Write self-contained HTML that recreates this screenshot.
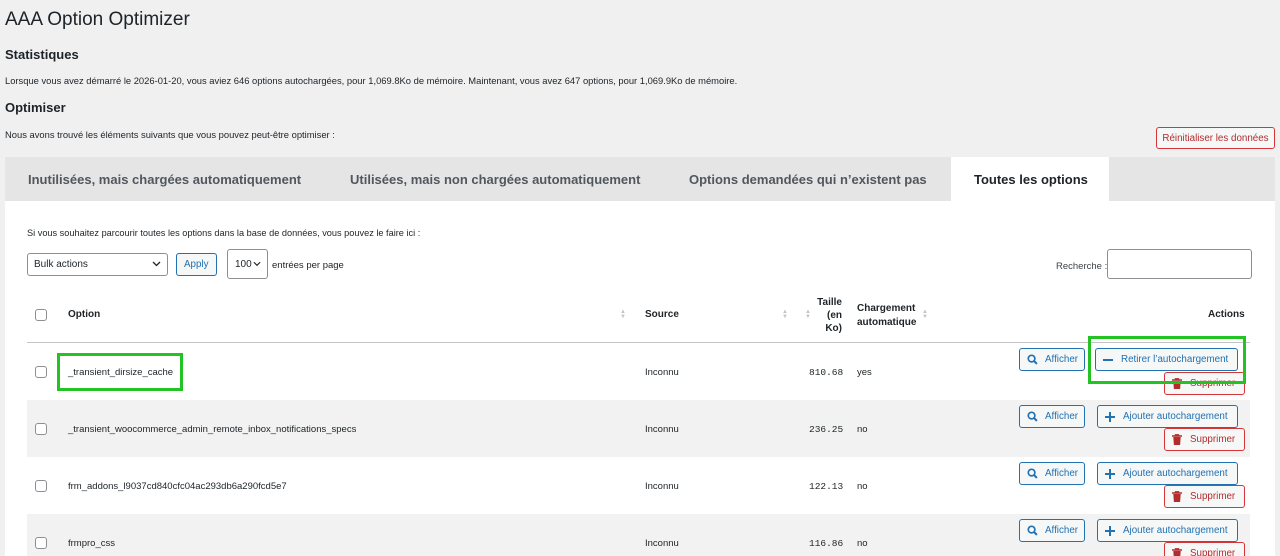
<!DOCTYPE html>
<html><head><meta charset="utf-8"><style>
*{box-sizing:border-box;margin:0;padding:0}
html,body{width:1280px;height:556px;overflow:hidden}
body{background:#f0f0f1;font-family:"Liberation Sans",sans-serif;color:#1d2327;position:relative}
.a{position:absolute;white-space:nowrap}
.btn{position:absolute;height:23px;border:1px solid #2271b1;border-radius:3px;background:#f6f7f7;color:#2271b1;font-size:9.8px;display:flex;align-items:center;padding:0 7px;white-space:nowrap}
.del{border-color:#d63638;color:#b32d2e;background:#f6f7f7}
.cb{position:absolute;width:12px;height:12px;border:1px solid #8c8f94;border-radius:3px;background:#fff}
.sort{position:absolute;font-size:6px;color:#c3c4c7;line-height:5px}
.t{font-size:9.5px}
svg{flex:none}
</style></head><body>
<div class="a" style="left:5px;top:9px;font-size:19px">AAA Option Optimizer</div>
<div class="a" style="left:5px;top:47px;font-size:13px;font-weight:bold">Statistiques</div>
<div class="a" style="left:5px;top:75px;font-size:9.4px">Lorsque vous avez démarré le 2026-01-20, vous aviez 646 options autochargées, pour 1,069.8Ko de mémoire. Maintenant, vous avez 647 options, pour 1,069.9Ko de mémoire.</div>
<div class="a" style="left:5px;top:100px;font-size:13px;font-weight:bold">Optimiser</div>
<div class="a" style="left:5px;top:129px;font-size:9.4px">Nous avons trouvé les éléments suivants que vous pouvez peut-être optimiser :</div>
<div class="btn del" style="left:1156px;width:119px;top:127px;height:22px;justify-content:center;padding:0">Réinitialiser les données</div>

<div class="a" style="left:5px;top:157px;width:1270px;height:399px;background:#fff"></div>
<div class="a" style="left:5px;top:157px;width:1270px;height:44px;background:#e5e5e5"></div>
<div class="a" style="left:951px;top:157px;width:158px;height:44px;background:#fff"></div>
<div class="a" style="left:28px;top:172px;font-size:13px;font-weight:bold;color:#50575e">Inutilisées, mais chargées automatiquement</div>
<div class="a" style="left:350px;top:172px;font-size:13px;font-weight:bold;color:#50575e">Utilisées, mais non chargées automatiquement</div>
<div class="a" style="left:689px;top:172px;font-size:13px;font-weight:bold;color:#50575e">Options demandées qui n’existent pas</div>
<div class="a" style="left:974px;top:172px;font-size:13px;font-weight:bold;color:#1d2327">Toutes les options</div>

<div class="a" style="left:27px;top:228px;font-size:9.2px">Si vous souhaitez parcourir toutes les options dans la base de données, vous pouvez le faire ici :</div>
<div class="a" style="left:27px;top:253px;width:141px;height:23px;border:1px solid #8c8f94;border-radius:3px;background:#fff;font-size:10px;padding:5px 6px">Bulk actions<svg style="position:absolute;right:6px;top:7px" width="9" height="6" viewBox="0 0 9 6"><path d="M1 1l3.5 3.5L8 1" stroke="#1d2327" stroke-width="1.3" fill="none"/></svg></div>
<div class="btn" style="left:176px;top:253px;height:23px;padding:0 7px">Apply</div>
<div class="a" style="left:227px;top:249px;width:41px;height:30px;border:1px solid #8c8f94;border-radius:3px;background:#fff;font-size:10px;padding:9px 7px">100<svg style="margin-left:1px" width="8" height="6" viewBox="0 0 9 6"><path d="M1 1l3.5 3.5L8 1" stroke="#1d2327" stroke-width="1.3" fill="none"/></svg></div>
<div class="a" style="left:272px;top:260px;font-size:9.5px">entrées per page</div>
<div class="a" style="left:1056px;top:261px;font-size:9.5px;color:#3c434a">Recherche :</div>
<div class="a" style="left:1107px;top:249px;width:145px;height:30px;border:1px solid #8c8f94;border-radius:3px;background:#fff"></div>

<div class="cb" style="left:35px;top:309px"></div>
<div class="a" style="left:68px;top:309px;font-size:10px;font-weight:bold">Option</div>
<div class="sort" style="left:620px;top:310px">▲<br>▼</div>
<div class="a" style="left:645px;top:309px;font-size:10px;font-weight:bold">Source</div>
<div class="sort" style="left:782px;top:310px">▲<br>▼</div>
<div class="sort" style="left:805px;top:310px">▲<br>▼</div>
<div class="a" style="left:800px;top:296px;width:42px;text-align:right;font-size:10px;font-weight:bold;line-height:13px">Taille<br>(en<br>Ko)</div>
<div class="a" style="left:857px;top:302px;font-size:10px;font-weight:bold;line-height:14px">Chargement<br>automatique</div>
<div class="sort" style="left:922px;top:310px">▲<br>▼</div>
<div class="a" style="left:1208px;top:309px;font-size:10px;font-weight:bold">Actions</div>
<div class="a" style="left:27px;top:342px;width:1223px;height:1px;background:#c3c4c7"></div>

<div class="a" style="left:27px;top:400px;width:1223px;height:57px;background:#f2f2f2"></div>
<div class="a" style="left:27px;top:514px;width:1223px;height:42px;background:#f2f2f2"></div>

<!-- row1 -->
<div class="cb" style="left:35px;top:366px"></div>
<div class="a t" style="left:68px;top:367px">_transient_dirsize_cache</div>
<div class="a t" style="left:645px;top:367px">Inconnu</div>
<div class="a" style="left:809px;top:367px;font-size:9.5px;font-family:'Liberation Mono',monospace">810.68</div>
<div class="a t" style="left:857px;top:367px">yes</div>
<div class="btn" style="left:1019px;top:348px;width:66px"><svg width="11" height="11" viewBox="0 0 12 12"><circle cx="5" cy="5" r="3.6" stroke="#2271b1" stroke-width="1.8" fill="none"/><path d="M7.6 7.6l3.2 3.2" stroke="#2271b1" stroke-width="2.2"/></svg><span style="margin-left:7px">Afficher</span></div>
<div class="btn" style="left:1095px;top:348px;width:143px"><svg width="10" height="10" viewBox="0 0 10 10"><path d="M0 5h10" stroke="#2271b1" stroke-width="2"/></svg><span style="margin-left:8px">Retirer l’autochargement</span></div>
<div class="btn del" style="left:1164px;top:372px;width:81px"><svg width="10" height="11" viewBox="0 0 10 11"><path d="M0 2h10M3.5 2V0.8h3V2" stroke="#b32d2e" stroke-width="1.4" fill="none"/><path d="M1.3 3h7.4l-0.6 8H1.9z" fill="#b32d2e"/></svg><span style="margin-left:8px">Supprimer</span></div>
<div class="a" style="left:57px;top:353px;width:126px;height:38px;border:3px solid #22c322"></div>
<div class="a" style="left:1088px;top:336px;width:158px;height:48px;border:3px solid #22c322"></div>

<!-- row2 -->
<div class="cb" style="left:35px;top:423px"></div>
<div class="a t" style="left:68px;top:424px">_transient_woocommerce_admin_remote_inbox_notifications_specs</div>
<div class="a t" style="left:645px;top:424px">Inconnu</div>
<div class="a" style="left:809px;top:424px;font-size:9.5px;font-family:'Liberation Mono',monospace">236.25</div>
<div class="a t" style="left:857px;top:424px">no</div>
<div class="btn" style="left:1019px;top:405px;width:66px"><svg width="11" height="11" viewBox="0 0 12 12"><circle cx="5" cy="5" r="3.6" stroke="#2271b1" stroke-width="1.8" fill="none"/><path d="M7.6 7.6l3.2 3.2" stroke="#2271b1" stroke-width="2.2"/></svg><span style="margin-left:7px">Afficher</span></div>
<div class="btn" style="left:1097px;top:405px;width:141px"><svg width="10" height="10" viewBox="0 0 10 10"><path d="M0 5h10M5 0v10" stroke="#2271b1" stroke-width="2"/></svg><span style="margin-left:8px">Ajouter autochargement</span></div>
<div class="btn del" style="left:1164px;top:428px;width:81px"><svg width="10" height="11" viewBox="0 0 10 11"><path d="M0 2h10M3.5 2V0.8h3V2" stroke="#b32d2e" stroke-width="1.4" fill="none"/><path d="M1.3 3h7.4l-0.6 8H1.9z" fill="#b32d2e"/></svg><span style="margin-left:8px">Supprimer</span></div>

<!-- row3 -->
<div class="cb" style="left:35px;top:480px"></div>
<div class="a t" style="left:68px;top:481px">frm_addons_l9037cd840cfc04ac293db6a290fcd5e7</div>
<div class="a t" style="left:645px;top:481px">Inconnu</div>
<div class="a" style="left:809px;top:481px;font-size:9.5px;font-family:'Liberation Mono',monospace">122.13</div>
<div class="a t" style="left:857px;top:481px">no</div>
<div class="btn" style="left:1019px;top:462px;width:66px"><svg width="11" height="11" viewBox="0 0 12 12"><circle cx="5" cy="5" r="3.6" stroke="#2271b1" stroke-width="1.8" fill="none"/><path d="M7.6 7.6l3.2 3.2" stroke="#2271b1" stroke-width="2.2"/></svg><span style="margin-left:7px">Afficher</span></div>
<div class="btn" style="left:1097px;top:462px;width:141px"><svg width="10" height="10" viewBox="0 0 10 10"><path d="M0 5h10M5 0v10" stroke="#2271b1" stroke-width="2"/></svg><span style="margin-left:8px">Ajouter autochargement</span></div>
<div class="btn del" style="left:1164px;top:485px;width:81px"><svg width="10" height="11" viewBox="0 0 10 11"><path d="M0 2h10M3.5 2V0.8h3V2" stroke="#b32d2e" stroke-width="1.4" fill="none"/><path d="M1.3 3h7.4l-0.6 8H1.9z" fill="#b32d2e"/></svg><span style="margin-left:8px">Supprimer</span></div>

<!-- row4 -->
<div class="cb" style="left:35px;top:537px"></div>
<div class="a t" style="left:68px;top:538px">frmpro_css</div>
<div class="a t" style="left:645px;top:538px">Inconnu</div>
<div class="a" style="left:809px;top:538px;font-size:9.5px;font-family:'Liberation Mono',monospace">116.86</div>
<div class="a t" style="left:857px;top:538px">no</div>
<div class="btn" style="left:1019px;top:519px;width:66px"><svg width="11" height="11" viewBox="0 0 12 12"><circle cx="5" cy="5" r="3.6" stroke="#2271b1" stroke-width="1.8" fill="none"/><path d="M7.6 7.6l3.2 3.2" stroke="#2271b1" stroke-width="2.2"/></svg><span style="margin-left:7px">Afficher</span></div>
<div class="btn" style="left:1097px;top:519px;width:141px"><svg width="10" height="10" viewBox="0 0 10 10"><path d="M0 5h10M5 0v10" stroke="#2271b1" stroke-width="2"/></svg><span style="margin-left:8px">Ajouter autochargement</span></div>
<div class="btn del" style="left:1164px;top:542px;width:81px"><svg width="10" height="11" viewBox="0 0 10 11"><path d="M0 2h10M3.5 2V0.8h3V2" stroke="#b32d2e" stroke-width="1.4" fill="none"/><path d="M1.3 3h7.4l-0.6 8H1.9z" fill="#b32d2e"/></svg><span style="margin-left:8px">Supprimer</span></div>
</body></html>
